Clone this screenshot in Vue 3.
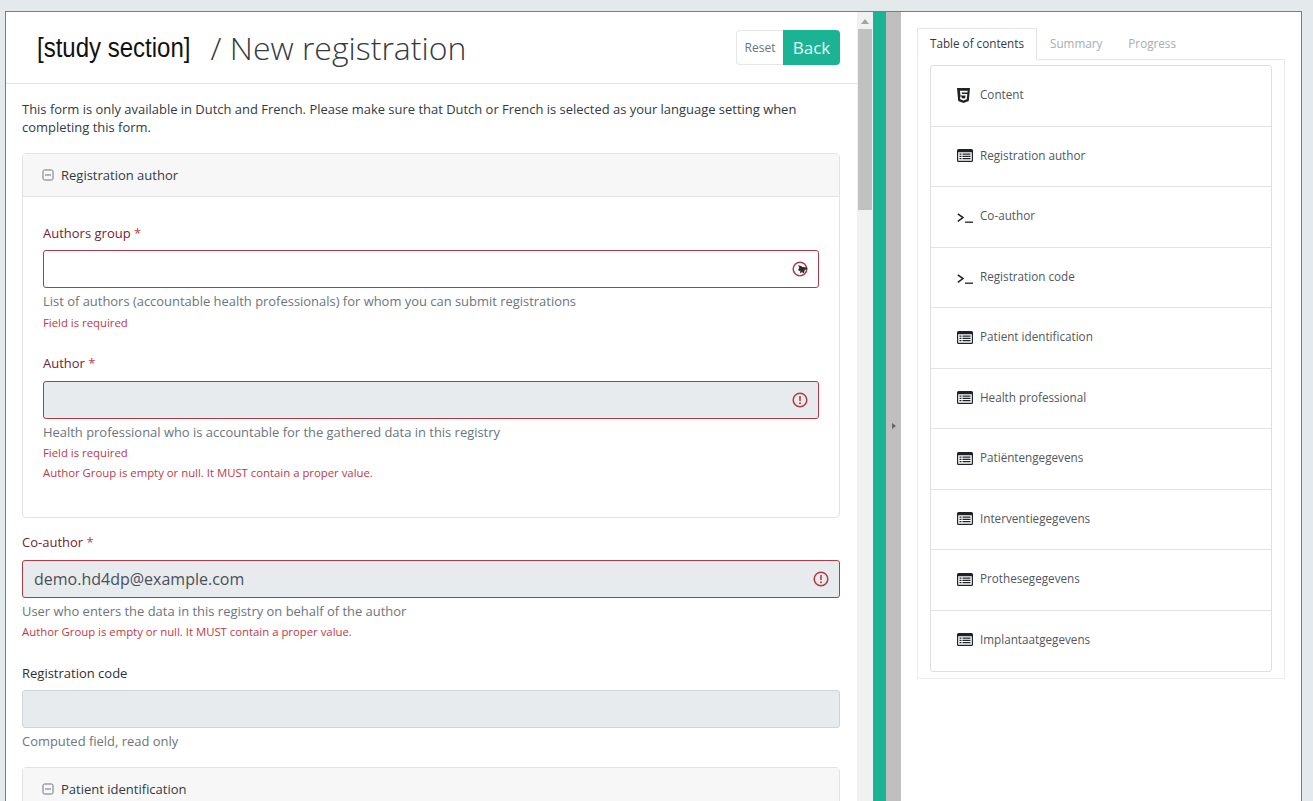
<script setup>
const tocItems = [
  { label: 'Content', icon: 'html' },
  { label: 'Registration author', icon: 'list' },
  { label: 'Co-author', icon: 'term' },
  { label: 'Registration code', icon: 'term' },
  { label: 'Patient identification', icon: 'list' },
  { label: 'Health professional', icon: 'list' },
  { label: 'Patiëntengegevens', icon: 'list' },
  { label: 'Interventiegegevens', icon: 'list' },
  { label: 'Prothesegegevens', icon: 'list' },
  { label: 'Implantaatgegevens', icon: 'list' }
]
</script>

<template>
  <div class="page">
    <div class="frame">
      <section class="left">
        <header class="head">
          <h1 class="title"><span class="study">[study section]</span><span class="new">/ New registration</span></h1>
          <div class="btns">
            <button class="reset">Reset</button>
            <button class="back">Back</button>
          </div>
        </header>
        <div class="content">
          <p class="intro">This form is only available in Dutch and French. Please make sure that Dutch or French is selected as your language setting when completing this form.</p>

          <div class="card">
            <div class="card-head">
              <svg class="minus" viewBox="0 0 12 12"><rect x="1" y="1" width="10" height="10" rx="1.5" fill="none" stroke="#6c757d" stroke-width="1"/><path d="M3 6h6" stroke="#6c757d" stroke-width="1"/></svg>
              <span>Registration author</span>
            </div>
            <div class="card-body">
              <div class="field first">
                <label class="lab err">Authors group <i>*</i></label>
                <div class="input invalid">
                  <svg class="warn" viewBox="0 0 16 16"><circle cx="8" cy="8" r="6.8" fill="none" stroke="#b23a48" stroke-width="1.5"/><path d="M6.200 4.200l3 .8 1.300 1 4.500.6.300 1.400-2.600 1-.7 3-1.300.2-.5-1.700-1.200 1.500-1-.3.400-2.300-1.500.8-.7-2 1.200-1.200z" fill="#2b2b2b"/></svg>
                </div>
                <div class="help">List of authors (accountable health professionals) for whom you can submit registrations</div>
                <div class="error">Field is required</div>
              </div>
              <div class="field second">
                <label class="lab err">Author <i>*</i></label>
                <div class="input invalid ro">
                  <svg class="warn" viewBox="0 0 16 16"><circle cx="8" cy="8" r="6.8" fill="none" stroke="#b23a48" stroke-width="1.5"/><path d="M8 4v5" stroke="#b23a48" stroke-width="1.6"/><circle cx="8" cy="11.3" r="1" fill="#b23a48"/></svg>
                </div>
                <div class="help">Health professional who is accountable for the gathered data in this registry</div>
                <div class="error">Field is required</div>
                <div class="error">Author Group is empty or null. It MUST contain a proper value.</div>
              </div>
            </div>
          </div>

          <div class="field co">
            <label class="lab err">Co-author <i>*</i></label>
            <div class="input invalid ro">
              <span class="val">demo.hd4dp@example.com</span>
              <svg class="warn" viewBox="0 0 16 16"><circle cx="8" cy="8" r="6.8" fill="none" stroke="#b23a48" stroke-width="1.5"/><path d="M8 4v5" stroke="#b23a48" stroke-width="1.6"/><circle cx="8" cy="11.3" r="1" fill="#b23a48"/></svg>
            </div>
            <div class="help">User who enters the data in this registry on behalf of the author</div>
            <div class="error">Author Group is empty or null. It MUST contain a proper value.</div>
          </div>

          <div class="field code">
            <label class="lab">Registration code</label>
            <div class="input ro"></div>
            <div class="help">Computed field, read only</div>
          </div>

          <div class="card last">
            <div class="card-head">
              <svg class="minus" viewBox="0 0 12 12"><rect x="1" y="1" width="10" height="10" rx="1.5" fill="none" stroke="#6c757d" stroke-width="1"/><path d="M3 6h6" stroke="#6c757d" stroke-width="1"/></svg>
              <span>Patient identification</span>
            </div>
          </div>
        </div>
      </section>

      <div class="scrollbar">
        <svg class="arrow" viewBox="0 0 8 5"><path d="M4 0l4 5H0z" fill="#a3a3a3"/></svg>
        <div class="thumb"></div>
      </div>
      <div class="green"></div>
      <div class="splitter"><svg class="grip" viewBox="0 0 4 6"><path d="M0 0l4 3-4 3z" fill="#666"/></svg></div>

      <aside class="right">
        <nav class="tabs">
          <span class="tab active">Table of contents</span>
          <span class="tab">Summary</span>
          <span class="tab">Progress</span>
        </nav>
        <div class="tab-pane">
          <ul class="toc">
            <li v-for="item in tocItems" :key="item.label" class="toc-item">
              <span class="toc-icon">
                <svg v-if="item.icon === 'html'" class="ic-html" viewBox="0 0 14 16"><path fill-rule="evenodd" d="M0 0h14l-1.3 14L7 16l-5.7-2zM3.2 3l.5 5h5.4l-.2 2.6L7 11.3l-1.9-.7-.1-1.4H3.3l.2 2.9L7 13.3l3.5-1.2.6-5.7H5.3L5.1 4.700h6.200l.2-1.700z" fill="#1f2226"/></svg>
                <svg v-else-if="item.icon === 'list'" class="ic-list" viewBox="0 0 16 13"><path fill-rule="evenodd" d="M1.500 0h13A1.500 1.500 0 0 1 16 1.500v10a1.500 1.500 0 0 1-1.500 1.500h-13A1.500 1.500 0 0 1 0 11.500v-10A1.500 1.500 0 0 1 1.500 0zM1.200 3.200v8.300c0 .2.100.3.300.3h13c.2 0 .3-.1.300-.3V3.200zM2.500 4.500h2v1.300h-2zm3 0h8v1.300h-8zm-3 2.200h2V8h-2zm3 0h8V8h-8zm-3 2.200h2v1.300h-2zm3 0h8v1.300h-8z" fill="#1f2226"/></svg>
                <svg v-else class="ic-term" viewBox="0 0 16 10"><path d="M.8 .8L6 4.600.8 8.400" fill="none" stroke="#1f2226" stroke-width="1.500"/><path d="M8 9.200h8" stroke="#1f2226" stroke-width="1.300"/></svg>
              </span>
              <span class="toc-label">{{ item.label }}</span>
            </li>
          </ul>
        </div>
      </aside>
    </div>
  </div>
</template>

<style>
html, body { margin: 0; background: #e4e9ec; overflow: hidden; }
</style>

<style scoped>
.page {
  width: 1313px;
  height: 801px;
  background: #e4e9ec;
  padding: 11px 11px 0 5px;
  box-sizing: border-box;
  font-family: "Open Sans", "Liberation Sans", sans-serif;
  overflow: hidden;
}
.frame {
  display: flex;
  height: 790px;
  background: #fff;
  border: 1px solid #2f9f92;
  border-bottom: 0;
  box-sizing: border-box;
  overflow: hidden;
}
.left { width: 851px; flex: none; overflow: hidden; }
.head {
  height: 72px;
  box-sizing: border-box;
  border-bottom: 1px solid #e2e4e6;
  display: flex;
  align-items: center;
  justify-content: space-between;
  padding: 0 17px 0 31px;
}
.title { margin: 0; font-weight: 400; display: flex; align-items: center; }
.study {
  font-family: "Liberation Sans", sans-serif;
  font-size: 27px;
  color: #111;
  transform: scaleX(0.889);
  transform-origin: left center;
  margin-right: 1px;
  padding-top: 2px;
}
.new { font-weight: 300; font-size: 32px; color: #343a40; margin-top: -1px; }
.btns { display: flex; height: 35px; }
.btns button { font-family: inherit; padding: 0; cursor: pointer; box-sizing: border-box; }
.reset {
  width: 47px;
  background: #fff;
  border: 1px solid #e5e7e9;
  border-right: 0;
  border-radius: 4px 0 0 4px;
  color: #6c757d;
  font-size: 12px;
}
.back {
  width: 57px;
  background: #1cb394;
  border: 0;
  border-radius: 0 4px 4px 0;
  color: #eafaf6;
  font-size: 17px;
}
.content { padding: 16px 17px 0 16px; font-size: 13px; color: #343a40; }
.intro { margin: 0 0 17px; line-height: 18px; font-size: 12.960px; }
.card { border: 1px solid #e1e3e5; border-radius: 4px; }
.card-head {
  height: 43px;
  box-sizing: border-box;
  background: #f7f7f7;
  border-bottom: 1px solid #e1e3e5;
  display: flex;
  align-items: center;
  padding-left: 19px;
  font-size: 13px;
  color: #343a40;
}
.minus { width: 12px; height: 12px; margin-right: 7px; }
.card-body { padding: 27px 20px 0; height: 320px; box-sizing: border-box; }
.field.first .lab, .field.code .lab { margin-bottom: 8px; }
.field.first .error { margin-top: 4px; }
.field.second { margin-top: 23px; }
.field.co { margin-top: 15px; }
.field.code { margin-top: 24px; }
.card.last { margin-top: 17px; }
.lab { display: block; font-size: 13px; line-height: 18px; margin-bottom: 9px; color: #2b2f33; }
.lab.err { color: #6f2530; }
.lab i { font-style: normal; color: #c0394a; }
.input {
  height: 38px;
  box-sizing: border-box;
  border: 1px solid #ced4da;
  border-radius: 3px;
  background: #fff;
  display: flex;
  align-items: center;
  padding: 0 10px 0 11px;
}
.input.ro { background: #e8ebee; }
.input.invalid { border-color: #b23a48; }
.val { font-size: 16px; color: #495057; }
.warn { width: 16px; height: 16px; margin-left: auto; overflow: visible; }
.help { margin-top: 4px; font-size: 12.950px; line-height: 18px; color: #6c757d; }
.error { margin-top: 3px; font-size: 11.350px; line-height: 17px; color: #bd3a48; }
.scrollbar { width: 16px; flex: none; background: #f1f1f1; position: relative; padding-top: 17px; box-sizing: border-box; }
.arrow { position: absolute; top: 7px; left: 4px; width: 8px; height: 5px; }
.thumb { width: 14px; margin: 0 auto; height: 181px; background: #c1c1c1; }
.green { width: 13px; flex: none; background: #1cb394; }
.splitter { width: 15px; flex: none; background: #bfbfbf; display: flex; align-items: flex-start; justify-content: center; padding-top: 411px; box-sizing: border-box; }
.grip { width: 4px; height: 6px; }
.right { flex: 1; padding: 16px 16px 0; min-width: 0; }
.tabs { display: flex; height: 32px; font-size: 11.700px; }
.tab { display: flex; align-items: center; padding: 0 13px 2px; color: #a6adb4; box-sizing: border-box; }
.tab.active { width: 120px; border: 1px solid #e5e7e9; border-bottom-color: #fff; color: #343a40; position: relative; z-index: 1; justify-content: center; padding: 0 0 2px; }
.tab-pane { border: 1px solid #e9ebed; border-top: 1px solid #e5e7e9; padding: 5px 12px 6px; margin-top: -1px; width: 368px; box-sizing: border-box; }
.toc { list-style: none; margin: 0; padding: 0; border: 1px solid #dcdfe2; border-radius: 3px; }
.toc-item {
  height: 60.500px;
  box-sizing: border-box;
  border-bottom: 1px solid #e1e3e5;
  display: flex;
  align-items: flex-start;
  padding: 20px 0 0 26px;
  font-size: 11.700px;
  line-height: 16px;
  color: #51575d;
}
.toc-item:last-child { border-bottom: 0; }
.toc-icon { width: 23px; display: flex; height: 18px; align-items: center; }
.ic-html { width: 13px; height: 15px; }
.ic-list { width: 16px; height: 13px; }
.ic-term { width: 16px; height: 10px; margin-top: 4px; }
</style>
